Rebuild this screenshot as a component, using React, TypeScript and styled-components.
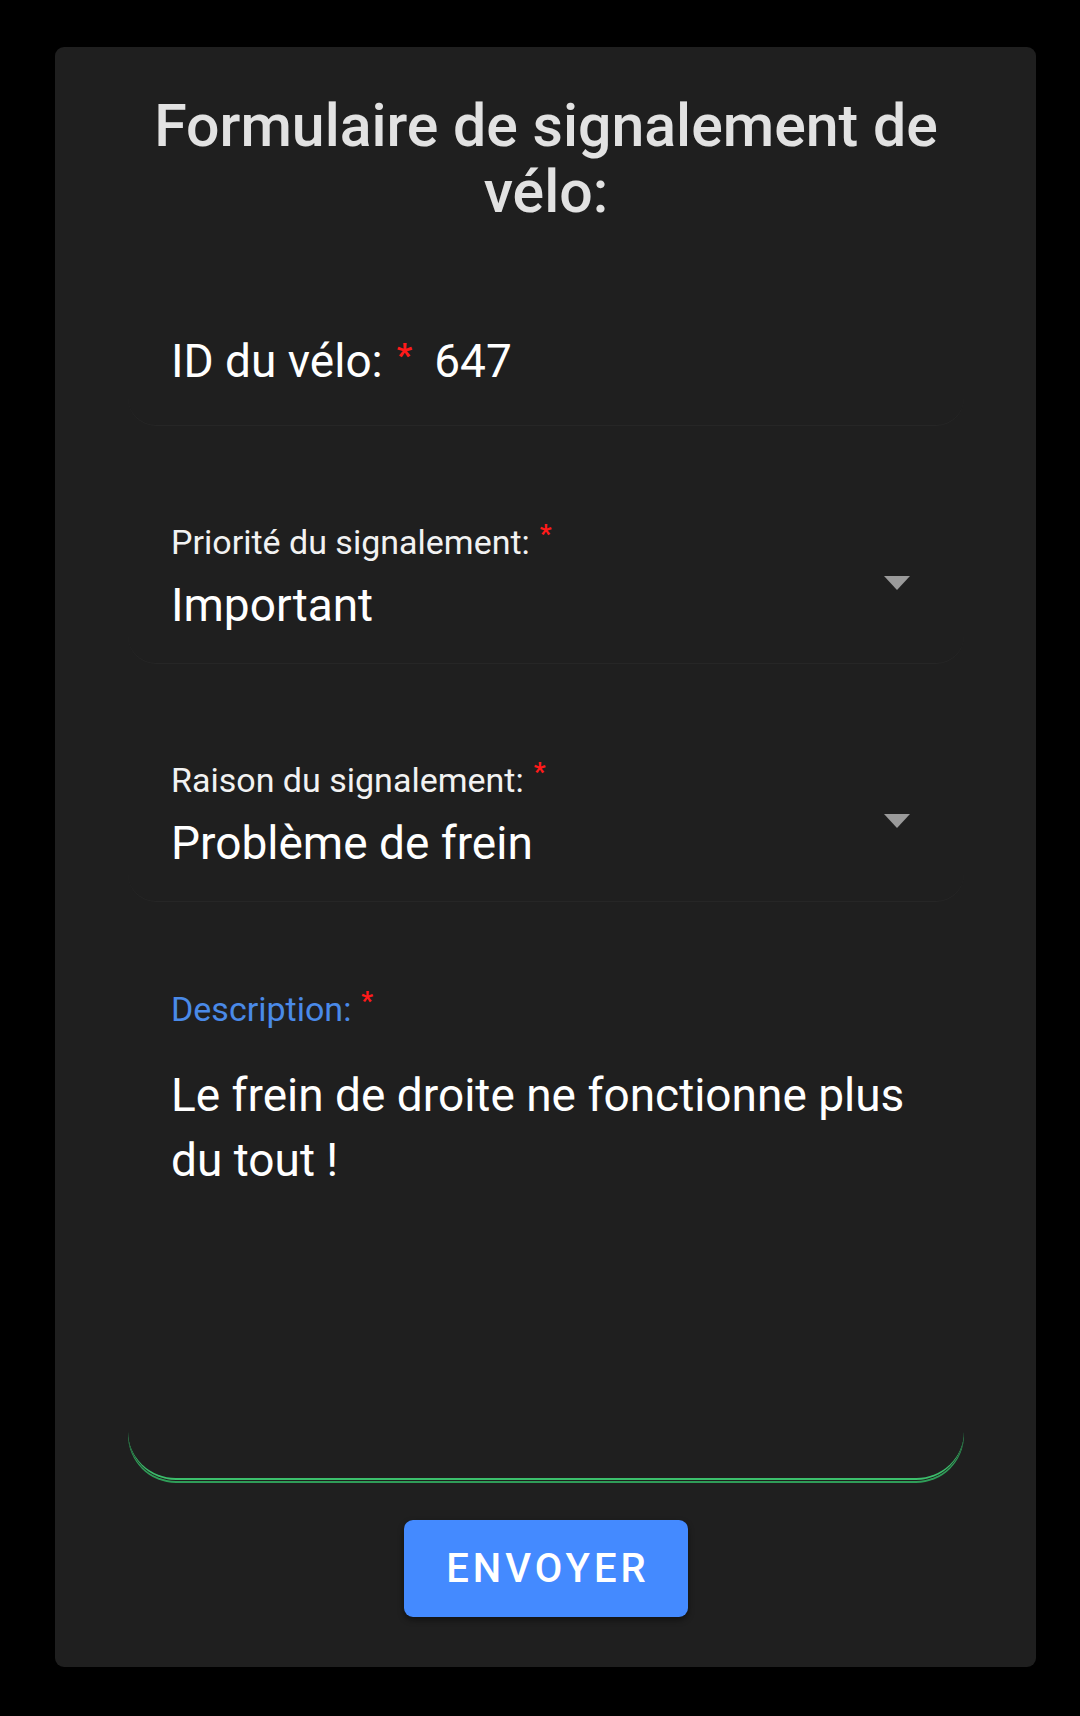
import React from "react";
import styled, { createGlobalStyle } from "styled-components";

const Global = createGlobalStyle`
  html, body { margin: 0; padding: 0; background: #000; }
  body { font-family: Roboto, "Noto Sans", Arial, sans-serif; }
  * { box-sizing: border-box; }
`;

const Page = styled.div`
  min-height: 1716px;
  padding: 47px 44px 49px 55px;
  background: #000;
`;

const Card = styled.form`
  width: 981px;
  height: 1620px;
  background: #1f1f1f;
  border-radius: 9px;
  padding: 46px 72px 0 73px;
  display: flex;
  flex-direction: column;
`;

const Title = styled.h1`
  margin: 0 0 92px;
  font-size: 59px;
  line-height: 66px;
  font-weight: 500;
  color: #e2e2e2;
  text-align: center;
  padding: 0 6px;
`;

const Field = styled.div<{ $bottom?: number; $gap?: number }>`
  position: relative;
  margin-bottom: ${(p) => p.$gap ?? 80}px;
  padding: 16px 43px ${(p) => p.$bottom ?? 30}px;
  border-bottom: 1px solid #262626;
  border-radius: 0 0 28px 28px;
  display: flex;
  flex-direction: column;
  gap: 15px;
`;

const InlineRow = styled.div`
  display: flex;
  align-items: center;
  height: 56px;
  font-size: 46px;
  color: #fff;
`;

const Req = styled.span<{ $size?: number; $lift?: number }>`
  color: #ff1a1a;
  font-size: ${(p) => p.$size ?? 34}px;
  font-weight: 700;
  position: relative;
  top: ${(p) => -(p.$lift ?? 6)}px;
  margin-left: ${(p) => (p.$size ? 10 : 14)}px;
`;

const Value = styled.span`
  margin-left: 22px;
`;

const Label = styled.div<{ $active?: boolean }>`
  font-size: 34px;
  line-height: 40px;
  color: ${(p) => (p.$active ? "#4a8ae8" : "#f2f2f2")};
  display: flex;
  align-items: center;
`;

const SelectValue = styled.div`
  font-size: 46px;
  line-height: 56px;
  color: #fff;
`;

const Caret = styled.span`
  position: absolute;
  right: 54px;
  top: 70px;
  width: 0;
  height: 0;
  border-left: 13px solid transparent;
  border-right: 13px solid transparent;
  border-top: 14px solid #9a9a9a;
`;

const Description = styled.div`
  padding: 11px 43px 0;
  border-bottom: 2px solid #3cbf6c;
  border-radius: 0 0 48px 48px;
  box-shadow: 0 1px 0 #1f1f1f, 0 3px 0 #2f9d58;
  display: flex;
  flex-direction: column;
`;

const DescText = styled.div`
  margin-top: 34px;
  height: 415px;
  font-size: 46px;
  line-height: 65px;
  color: #fff;
`;

const ButtonRow = styled.div`
  display: flex;
  justify-content: center;
  margin-top: 40px;
`;

const Submit = styled.button`
  width: 284px;
  height: 97px;
  border: none;
  border-radius: 9px;
  background: #448aff;
  color: #fff;
  font-family: Roboto, "Noto Sans", Arial, sans-serif;
  font-size: 40px;
  font-weight: 500;
  letter-spacing: 4px;
  padding: 0 0 0 4px;
  box-shadow: 0 3px 6px rgba(0, 0, 0, 0.45);
`;

export default function App() {
  return (
    <>
      <Global />
      <Page>
        <Card onSubmit={(e) => e.preventDefault()}>
          <Title>Formulaire de signalement de vélo:</Title>

          <Field $bottom={36}>
            <InlineRow>
              ID du vélo:<Req>*</Req>
              <Value>647</Value>
            </InlineRow>
          </Field>

          <Field>
            <Label>
              Priorité du signalement:<Req $size={26} $lift={8}>*</Req>
            </Label>
            <SelectValue>Important</SelectValue>
            <Caret />
          </Field>

          <Field $gap={76}>
            <Label>
              Raison du signalement:<Req $size={26} $lift={8}>*</Req>
            </Label>
            <SelectValue>Problème de frein</SelectValue>
            <Caret />
          </Field>

          <Description>
            <Label $active>
              Description:<Req $size={26} $lift={8}>*</Req>
            </Label>
            <DescText>Le frein de droite ne fonctionne plus du tout !</DescText>
          </Description>

          <ButtonRow>
            <Submit type="submit">ENVOYER</Submit>
          </ButtonRow>
        </Card>
      </Page>
    </>
  );
}
